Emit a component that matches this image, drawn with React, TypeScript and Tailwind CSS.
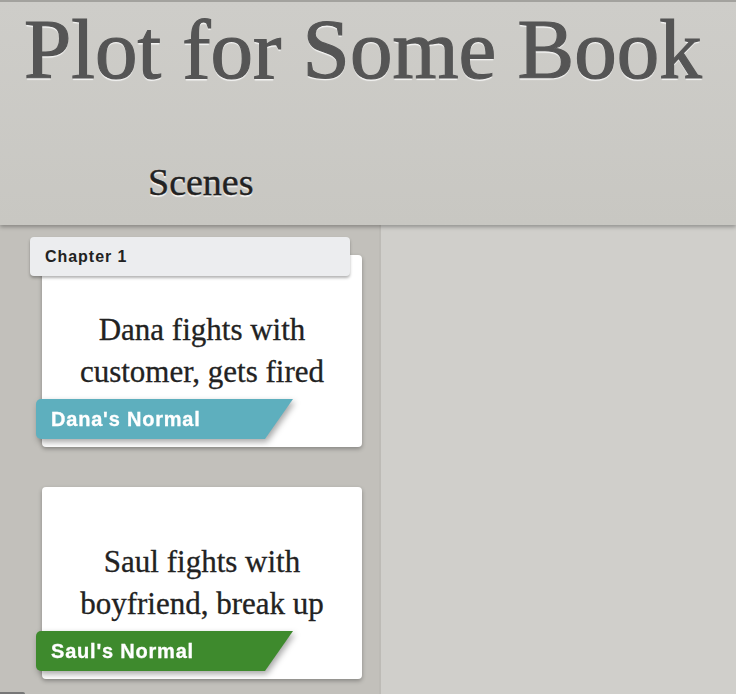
const serif = "font-['Liberation_Serif','DejaVu_Serif',serif]";
const sans = "font-['Liberation_Sans','Roboto',sans-serif]";

type Scene = {
  id: string;
  text: string[];
  label: string;
  color: string;
};

const scenes: Scene[] = [
  { id: "s1", text: ["Dana fights with", "customer, gets fired"], label: "Dana's Normal", color: "bg-[#5eafbe]" },
  { id: "s2", text: ["Saul fights with", "boyfriend, break up"], label: "Saul's Normal", color: "bg-[#3e8a2d]" }
];

function SceneCard({ scene, className }: { scene: Scene; className?: string }) {
  return (
    <article className={`ml-[42px] flex h-[192px] w-[320px] flex-col rounded-[4px] bg-white shadow-[0_2px_4px_rgba(0,0,0,0.3)] ${className ?? ""}`}>
      <div className={`pt-[54px] text-center text-[31px] leading-[42px] text-[#222] [-webkit-text-stroke:0.3px_#222] ${serif}`}>
        {scene.text.map((line) => (
          <div key={line}>{line}</div>
        ))}
      </div>
      <div className="-ml-[6px] mt-[6px] w-[257px] [filter:drop-shadow(2px_3px_3px_rgba(0,0,0,0.35))]">
        <div className={`flex h-[40px] items-center rounded-l-[5px] pl-[15px] text-[20px] font-bold tracking-[0.04em] text-white [-webkit-text-stroke:0.3px_#fff] [clip-path:polygon(0_0,100%_0,calc(100%-28px)_100%,0_100%)] ${scene.color} ${sans}`}>
          {scene.label}
        </div>
      </div>
    </article>
  );
}

export default function App() {
  return (
    <div className="flex h-[694px] w-[736px] flex-col overflow-hidden bg-[#d0cfcb]">
      <header className="relative z-10 h-[225px] shrink-0 border-t-[2px] border-[#a3a29e] bg-gradient-to-b from-[#cecdc9] to-[#c8c7c2] shadow-[0_2px_4px_rgba(0,0,0,0.3)]">
        <h1 className={`mt-[4px] pl-[24px] text-[85px] leading-[86px] text-[#555] [-webkit-text-stroke:1.2px_#555] [text-shadow:0_2px_1px_rgba(255,255,255,0.8)] ${serif}`}>
          Plot for Some Book
        </h1>
        <h2 className={`mt-[71px] pl-[148px] text-[38px] leading-[38px] text-[#222] [-webkit-text-stroke:0.4px_#222] [text-shadow:0_2px_1px_rgba(255,255,255,0.8)] ${serif}`}>
          Scenes
        </h2>
      </header>
      <div className="flex min-h-0 flex-1">
        <section className="w-[381px] shrink-0 border-r-[2px] border-[#bdbbb6] bg-[#c2c0bb] pt-[12px]">
          <div className={`relative z-10 ml-[30px] flex h-[39px] w-[320px] items-center rounded-[4px] bg-[#ecedef] pl-[15px] text-[16px] font-bold tracking-[0.06em] text-[#222] shadow-[0_2px_3px_rgba(0,0,0,0.3)] ${sans}`}>
            Chapter 1
          </div>
          <SceneCard scene={scenes[0]} className="-mt-[21px]" />
          <SceneCard scene={scenes[1]} className="mt-[40px]" />
          <div className="mt-[13px] h-[4px] w-[25px] rounded-tr-[2px] bg-[#777]" />
        </section>
        <main className="flex-1" />
      </div>
    </div>
  );
}
